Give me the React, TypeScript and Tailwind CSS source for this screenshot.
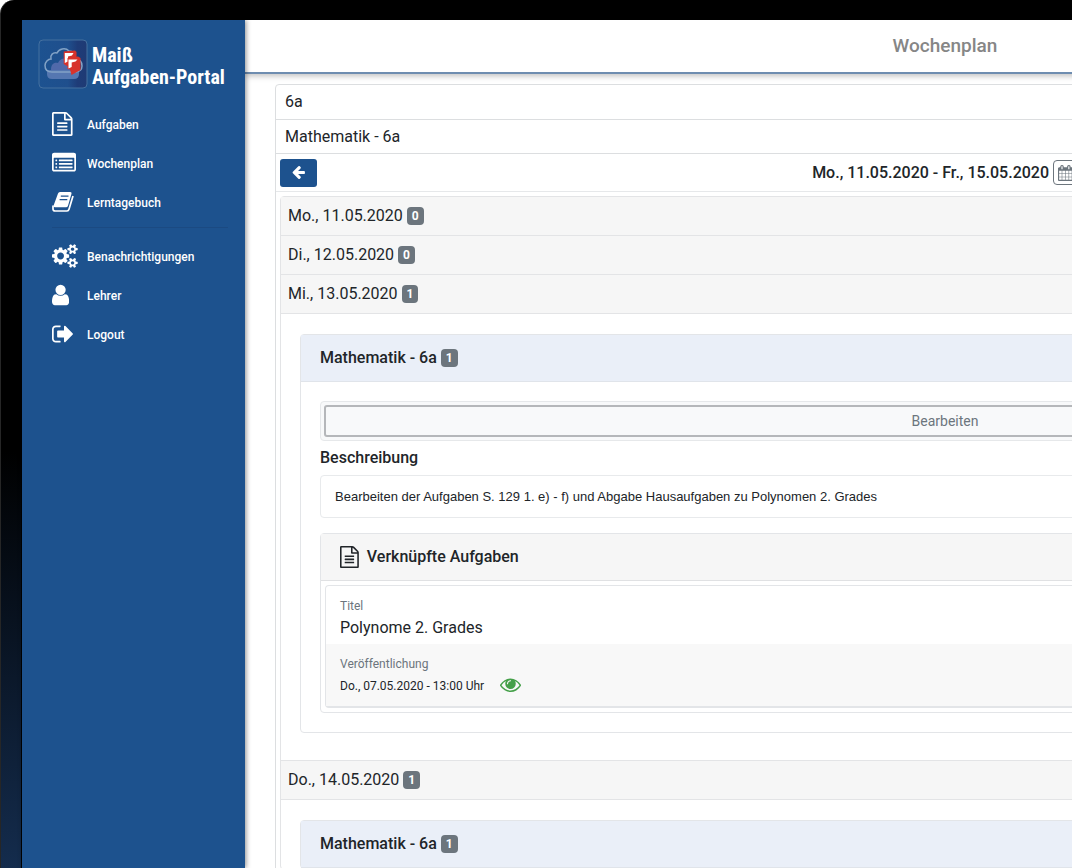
import type { ReactNode } from "react";

type IconName =
  | "file"
  | "list"
  | "cogs"
  | "user"
  | "logout"
  | "back"
  | "calendar"
  | "eye";

const ICONS: Record<IconName, { viewBox: string; d: string }> = {
  file: {
    viewBox: "128 0 1536 1792",
    d: "M1596 380q28 28 48 76t20 88v1152q0 40-28 68t-68 28h-1344q-40 0-68-28t-28-68v-1600q0-40 28-68t68-28h896q40 0 88 20t76 48zm-444-244v376h376q-10-29-22-41l-313-313q-12-12-41-22zm384 1528v-1024h-416q-40 0-68-28t-28-68v-416h-768v1536h1280zm-1024-864q0-14 9-23t23-9h704q14 0 23 9t9 23v64q0 14-9 23t-23 9h-704q-14 0-23-9t-9-23v-64zm736 224q14 0 23 9t9 23v64q0 14-9 23t-23 9h-704q-14 0-23-9t-9-23v-64q0-14 9-23t23-9h704zm0 256q14 0 23 9t9 23v64q0 14-9 23t-23 9h-704q-14 0-23-9t-9-23v-64q0-14 9-23t23-9h704z",
  },
  list: {
    viewBox: "0 0 1792 1792",
    d: "M384 1184v64q0 13-9.5 22.5t-22.5 9.5h-64q-13 0-22.5-9.5t-9.5-22.5v-64q0-13 9.5-22.5t22.5-9.5h64q13 0 22.5 9.5t9.5 22.5zm0-256v64q0 13-9.5 22.5t-22.5 9.5h-64q-13 0-22.5-9.5t-9.5-22.5v-64q0-13 9.5-22.5t22.5-9.5h64q13 0 22.5 9.5t9.5 22.5zm0-256v64q0 13-9.5 22.5t-22.5 9.5h-64q-13 0-22.5-9.5t-9.5-22.5v-64q0-13 9.5-22.5t22.5-9.5h64q13 0 22.5 9.5t9.5 22.5zm1152 512v64q0 13-9.5 22.5t-22.5 9.5h-960q-13 0-22.5-9.5t-9.5-22.5v-64q0-13 9.5-22.5t22.5-9.5h960q13 0 22.5 9.5t9.5 22.5zm0-256v64q0 13-9.5 22.5t-22.5 9.5h-960q-13 0-22.5-9.5t-9.5-22.5v-64q0-13 9.5-22.5t22.5-9.5h960q13 0 22.5 9.5t9.5 22.5zm0-256v64q0 13-9.5 22.5t-22.5 9.5h-960q-13 0-22.5-9.5t-9.5-22.5v-64q0-13 9.5-22.5t22.5-9.5h960q13 0 22.5 9.5t9.5 22.5zm128 704v-832q0-13-9.5-22.5t-22.5-9.5h-1472q-13 0-22.5 9.5t-9.5 22.5v832q0 13 9.5 22.5t22.5 9.5h1472q13 0 22.5-9.5t9.5-22.5zm128-1088v1088q0 66-47 113t-113 47h-1472q-66 0-113-47t-47-113v-1088q0-66 47-113t113-47h1472q66 0 113 47t47 113z",
  },
  cogs: {
    viewBox: "0 0 1920 1792",
    d: "M896 896q0-106-75-181t-181-75-181 75-75 181 75 181 181 75 181-75 75-181zm768 512q0-52-38-90t-90-38-90 38-38 90q0 53 37.5 90.5t90.5 37.5 90.5-37.5 37.5-90.5zm0-1024q0-52-38-90t-90-38-90 38-38 90q0 53 37.5 90.5t90.5 37.5 90.5-37.5 37.5-90.5zm-384 421v185q0 10-7 19.5t-16 10.5l-155 24q-11 35-32 76 34 48 90 115 7 11 7 20 0 12-7 19-23 30-82.5 89.5t-78.5 59.5q-11 0-21-7l-115-90q-37 19-77 31-11 108-23 155-7 24-30 24h-186q-11 0-20-7.5t-10-17.5l-23-153q-34-10-75-31l-118 89q-7 7-20 7-11 0-21-8-144-133-144-160 0-9 7-19 10-14 41-53t47-61q-23-44-35-82l-152-24q-10-1-17-9.5t-7-19.5v-185q0-10 7-19.5t16-10.5l155-24q11-35 32-76-34-48-90-115-7-11-7-20 0-12 7-20 22-30 82-89t79-59q11 0 21 7l115 90q34-18 77-32 11-108 23-154 7-24 30-24h186q11 0 20 7.5t10 17.5l23 153q34 10 75 31l118-89q8-7 20-7 11 0 21 8 144 133 144 160 0 8-7 19-12 16-42 54t-45 60q23 48 34 82l152 23q10 2 17 10.5t7 19.5zm640 533v140q0 16-149 31-12 27-30 52 51 113 51 138 0 4-4 7-122 71-124 71-8 0-46-47t-52-68q-20 2-30 2t-30-2q-14 21-52 68t-46 47q-2 0-124-71-4-3-4-7 0-25 51-138-18-25-30-52-149-15-149-31v-140q0-16 149-31 13-29 30-52-51-113-51-138 0-4 4-7 4-2 35-20t59-34 30-16q8 0 46 46.5t52 67.5q20-2 30-2t30 2q51-71 92-112l6-2q4 0 124 70 4 3 4 7 0 25-51 138 17 23 30 52 149 15 149 31zm0-1024v140q0 16-149 31-12 27-30 52 51 113 51 138 0 4-4 7-122 71-124 71-8 0-46-47t-52-68q-20 2-30 2t-30-2q-14 21-52 68t-46 47q-2 0-124-71-4-3-4-7 0-25 51-138-18-25-30-52-149-15-149-31v-140q0-16 149-31 13-29 30-52-51-113-51-138 0-4 4-7 4-2 35-20t59-34 30-16q8 0 46 46.5t52 67.5q20-2 30-2t30 2q51-71 92-112l6-2q4 0 124 70 4 3 4 7 0 25-51 138 17 23 30 52 149 15 149 31z",
  },
  user: {
    viewBox: "256 0 1280 1792",
    d: "M1536 1399q0 109-62.5 187t-150.5 78h-854q-88 0-150.5-78t-62.5-187q0-85 8.5-160.5t31.5-152 58.5-131 94-89 134.5-34.5q131 128 313 128t313-128q76 0 134.5 34.5t94 89 58.5 131 31.5 152 8.5 160.5zm-256-887q0 159-112.5 271.5t-271.5 112.5-271.5-112.5-112.5-271.5 112.5-271.5 271.5-112.5 271.5 112.5 112.5 271.5z",
  },
  logout: {
    viewBox: "64 0 1568 1792",
    d: "M704 1440q0 4 1 20t.5 26.5-3 23.5-10 19.5-20.5 6.5h-320q-119 0-203.5-84.5t-84.5-203.5v-704q0-119 84.5-203.5t203.5-84.5h320q13 0 22.5 9.5t9.5 22.5q0 4 1 20t.5 26.5-3 23.5-10 19.5-20.5 6.5h-320q-66 0-113 47t-47 113v704q0 66 47 113t113 47h312l11.5 1 11.5 3 8 5.5 7 9 2 13.5zm928-544q0 26-19 45l-544 544q-19 19-45 19t-45-19-19-45v-288h-448q-26 0-45-19t-19-45v-384q0-26 19-45t45-19h448v-288q0-26 19-45t45-19 45 19l544 544q19 19 19 45z",
  },
  back: {
    viewBox: "0 64 1792 1792",
    d: "M1664 896v128q0 53-32.5 90.5t-84.5 37.5h-704l293 294q38 36 38 90t-38 90l-75 76q-37 37-90 37-52 0-91-37l-651-652q-37-37-37-90 0-52 37-91l651-650q38-38 91-38 52 0 90 38l75 74q38 38 38 91t-38 91l-293 293h704q52 0 84.5 37.5t32.5 90.5z",
  },
  calendar: {
    viewBox: "64 0 1664 1792",
    d: "M192 1664h288v-288h-288v288zm352 0h320v-288h-320v288zm-352-352h288v-320h-288v320zm352 0h320v-320h-320v320zm-352-384h288v-288h-288v288zm736 736h320v-288h-320v288zm-384-736h320v-288h-320v288zm768 736h288v-288h-288v288zm-384-352h320v-320h-320v320zm-352-864v-288q0-13-9.5-22.5t-22.5-9.5h-64q-13 0-22.5 9.5t-9.5 22.5v288q0 13 9.5 22.5t22.5 9.5h64q13 0 22.5-9.5t9.5-22.5zm736 864h288v-320h-288v320zm-384-384h320v-288h-320v288zm384 0h288v-288h-288v288zm32-480v-288q0-13-9.5-22.5t-22.5-9.5h-64q-13 0-22.5 9.5t-9.5 22.5v288q0 13 9.5 22.5t22.5 9.5h64q13 0 22.5-9.5t9.5-22.5zm384-64v1280q0 52-38 90t-90 38h-1408q-52 0-90-38t-38-90v-1280q0-52 38-90t90-38h128v-96q0-66 47-113t113-47h64q66 0 113 47t47 113v96h384v-96q0-66 47-113t113-47h64q66 0 113 47t47 113v96h128q52 0 90 38t38 90z",
  },
  eye: {
    viewBox: "0 0 1792 1792",
    d: "M1664 960q-152-236-381-353 61 104 61 225 0 185-131.5 316.5t-316.5 131.5-316.5-131.5-131.5-316.5q0-121 61-225-229 117-381 353 133 205 333.5 326.5t434.5 121.5 434.5-121.5 333.5-326.5zm-720-384q0-20-14-34t-34-14q-125 0-214.5 89.5t-89.5 214.5q0 20 14 34t34 14 34-14 14-34q0-86 61-147t147-61q20 0 34-14t14-34zm848 384q0 34-20 69-140 230-376.5 368.5t-499.5 138.5-499.5-139-376.5-368q-20-35-20-69t20-69q140-229 376.5-368t499.5-139 499.5 139 376.5 368q20 35 20 69zM1210 832a314 314 0 1 1-628 0a314 314 0 1 1 628 0zM944 576q0-20-14-34t-34-14q-125 0-214.5 89.5t-89.5 214.5q0 20 14 34t34 14 34-14 14-34q0-86 61-147t147-61q20 0 34-14t14-34z",
  },
};

function Icon({ name, className }: { name: IconName; className: string }) {
  const icon = ICONS[name];
  return (
    <svg viewBox={icon.viewBox} className={className} fill="currentColor" aria-hidden="true">
      <path d={icon.d} />
    </svg>
  );
}

function BookIcon() {
  return (
    <svg viewBox="0 0 22 24" className="block h-6 w-auto" aria-hidden="true">
      <path
        d="M8 2H18.200Q20 2 19.500 3.800L16 15.700Q15.500 17.200 14 17.200H2.800Q1 17.200 1.600 15.500L6 3.500Q6.500 2 8 2Z"
        fill="currentColor"
      />
      <path
        d="M21 6L17 19.300Q16.500 21 15 21H3.200Q0.800 21 1 18.500V15.500"
        fill="none"
        stroke="currentColor"
        strokeWidth="1.700"
      />
      <path d="M8.800 6.200H16.500M7.600 9.700H15.300" fill="none" stroke="#1d528e" strokeWidth="1.300" />
    </svg>
  );
}

function Logo() {
  return (
    <svg viewBox="0 0 50 50" className="size-[50px] shrink-0" aria-hidden="true">
      <defs>
        <linearGradient id="tile" x1="0" x2="1" y1="0" y2="0">
          <stop offset="0" stopColor="#1d5290" />
          <stop offset="0.6" stopColor="#1f4f8d" />
          <stop offset="0.8" stopColor="#1e3c78" />
          <stop offset="1" stopColor="#1f3a74" />
        </linearGradient>
      </defs>
      <rect x="1" y="1" width="48" height="48" rx="4" fill="url(#tile)" stroke="#44709f" />
      <path d="M9 31H41V35Q41 40 36 40H14Q9 40 9 35Z" fill="#5577b1" />
      <path d="M13 31C13 25 16 23 20 24C22 19 28 18 31 22L36 25V31Z" fill="#5069aa" />
      <path
        d="M14 33C9 33 7 30 7 26.500C7 23 10 20 13 20C12 16 15 13 19 14C21 10 27 8 31 12C35 12 37 15 37 19C42 20 44 23 44 27C44 30 42 33 38 33Z"
        fill="none"
        stroke="#82a2c6"
        strokeWidth="1.500"
      />
      <path d="M25.700 12.500L37 11.500L38.500 13V25L29 27L25.700 25Z" fill="#d8322b" />
      <path d="M26.800 14H35.500L34 16.500L30 17.500V22.500L26.800 24Z" fill="#fff" />
      <path d="M29.500 19L40 17.500L42.500 19V31L33.500 36L32 30.500L29.500 30Z" fill="#d8322b" />
      <path d="M30.500 20.500H39.500L37.500 22.500L33.700 23.500V28L30.500 29.500Z" fill="#fff" />
    </svg>
  );
}

function NavItem({ icon, label }: { icon: ReactNode; label: string }) {
  return (
    <a href="#" className="flex h-[38px] items-center text-[12px] font-medium text-white">
      <span className="w-[35px] shrink-0">{icon}</span>
      <span className="pt-[2px]">{label}</span>
    </a>
  );
}

const navIcon = "block h-6 w-auto";

function Badge({ count }: { count: number }) {
  return (
    <span className="flex h-[18px] items-center rounded bg-[#6c757d] px-[5px] text-[12px] leading-[18px] font-bold text-white">
      {count}
    </span>
  );
}

function DayHeader({ label, count, open }: { label: string; count: number; open?: boolean }) {
  return (
    <button
      type="button"
      aria-expanded={!!open}
      className="flex h-[39px] w-full items-center gap-1 border-b border-[#e3e4e6] bg-[#f6f6f6] px-[7px] text-left"
    >
      {label}
      <Badge count={count} />
    </button>
  );
}

function SubjectCard({ children }: { children?: ReactNode }) {
  return (
    <section className="mx-[19px] mt-5 rounded border border-[#e3e5e8]">
      <h3 className="flex h-[47px] items-center gap-1 border-b border-[#e0e4ea] bg-[#eaeff8] px-[19px] font-medium">
        Mathematik - 6a
        <Badge count={1} />
      </h3>
      {children}
    </section>
  );
}

function LinkedTasks() {
  return (
    <section className="mt-[15px] rounded border border-[#e3e5e8]">
      <h4 className="flex h-[47px] items-center gap-2 border-b border-[#e0e1e3] bg-[#f6f6f6] px-[19px] font-medium">
        <Icon name="file" className="block h-[22px] w-auto" />
        Verknüpfte Aufgaben
      </h4>
      <div className="p-1">
        <dl className="rounded border border-b-2 border-[#e3e5e8]">
          <div className="px-[14px] pt-[10px] pb-1">
            <dt className="text-[12px] leading-5 text-[#6c757d]">Titel</dt>
            <dd className="leading-6">Polynome 2. Grades</dd>
          </div>
          <div className="bg-[#f8f8f8] px-[14px] pt-[10px] pb-2">
            <dt className="text-[12px] leading-5 text-[#6c757d]">Veröffentlichung</dt>
            <dd className="flex h-6 items-center gap-4 text-[12px]">
              Do., 07.05.2020 - 13:00 Uhr
              <Icon name="eye" className="mb-1 block size-[21px] text-[#45a049]" />
            </dd>
          </div>
        </dl>
      </div>
    </section>
  );
}

export default function App() {
  return (
    <div className="h-screen overflow-hidden bg-white font-['Roboto','Liberation_Sans',sans-serif] text-[16px] text-[#212529]">
      <div className="flex h-full flex-col rounded-tl-[14px] border-l border-[#262626] bg-[linear-gradient(to_bottom,#000_52%,#142c4d)] pt-5">
        <div className="ml-5 flex min-h-0 flex-1 border-l border-black">
          <aside className="z-10 w-[223px] shrink-0 bg-[#1d528e] shadow-[1px_0_5px_rgba(0,0,0,0.45)]">
            <div className="flex items-center gap-1 pt-[19px] pl-4">
              <Logo />
              <p className="pt-[3px] font-['Liberation_Sans_Narrow','Roboto_Condensed','Roboto',sans-serif] text-[20px] leading-[22px] font-bold whitespace-nowrap text-white">
                Maiß
                <br />
                Aufgaben-Portal
              </p>
            </div>
            <nav className="flex flex-col gap-px pt-4 pr-[17px] pl-[30px]">
              <NavItem icon={<Icon name="file" className={navIcon} />} label="Aufgaben" />
              <NavItem icon={<Icon name="list" className={navIcon} />} label="Wochenplan" />
              <NavItem icon={<BookIcon />} label="Lerntagebuch" />
              <hr className="mt-[5px] mb-2 border-[#1b4a82]" />
              <NavItem icon={<Icon name="cogs" className={navIcon} />} label="Benachrichtigungen" />
              <NavItem icon={<Icon name="user" className={navIcon} />} label="Lehrer" />
              <NavItem icon={<Icon name="logout" className={navIcon} />} label="Logout" />
            </nav>
          </aside>

          {/* The planner is laid out for a wide desktop and runs past the frame. */}
          <main className="flex min-w-[1400px] flex-1 flex-col bg-white">
            <header className="flex h-[54px] shrink-0 items-center justify-center border-b-2 border-[#6e8db0] shadow-[0_2px_6px_rgba(0,0,0,0.25)]">
              <h1 className="text-[19px] font-medium text-[#868686]">Wochenplan</h1>
            </header>

            <div className="mx-[30px] mt-[10px] shrink-0 rounded border border-[#dcdee0]">
              <div className="flex h-[35px] items-center border-b border-[#dcdee0] px-[9px]">6a</div>
              <div className="flex h-[34px] items-center border-b border-[#dcdee0] px-[9px]">
                Mathematik - 6a
              </div>
              <div className="grid h-[38px] grid-cols-[1fr_auto_1fr] items-center border-b border-[#e6e8ea] px-1">
                <button
                  type="button"
                  aria-label="Vorherige Woche"
                  className="flex h-7 w-[37px] items-center justify-center rounded-[3px] bg-[#1d528e] text-white"
                >
                  <Icon name="back" className="size-[15px]" />
                </button>
                <div className="flex items-center gap-1">
                  <h2 className="font-medium">Mo., 11.05.2020 - Fr., 15.05.2020</h2>
                  <button
                    type="button"
                    aria-label="Kalender"
                    className="flex h-[25px] items-center rounded border border-[#6c757d] px-1 text-[#6c757d]"
                  >
                    <Icon name="calendar" className="block h-4 w-auto" />
                  </button>
                </div>
              </div>

              <div className="m-1 rounded border border-[#e3e4e6]">
                <DayHeader label="Mo., 11.05.2020" count={0} />
                <DayHeader label="Di., 12.05.2020" count={0} />
                <DayHeader label="Mi., 13.05.2020" count={1} open />
                <div className="border-b border-[#e3e4e6] pb-[27px]">
                  <SubjectCard>
                    <div className="p-[19px]">
                      <div className="rounded border border-[#e6e8ea] bg-[#f8f9fa] p-[3px]">
                        <button
                          type="button"
                          className="h-8 w-full rounded-[3px] border-2 border-[#b5b7ba] text-[14px] text-[#6c757d]"
                        >
                          Bearbeiten
                        </button>
                      </div>
                      <h4 className="py-[5px] leading-6 font-medium">Beschreibung</h4>
                      <p className="rounded border border-[#e8eaec] px-[14px] py-[10px] font-['Liberation_Sans',sans-serif] text-[13px] leading-[21px]">
                        Bearbeiten der Aufgaben S. 129 1. e) - f) und Abgabe Hausaufgaben zu Polynomen
                        2. Grades
                      </p>
                      <LinkedTasks />
                    </div>
                  </SubjectCard>
                </div>
                <DayHeader label="Do., 14.05.2020" count={1} open />
                <SubjectCard />
              </div>
            </div>
          </main>
        </div>
      </div>
    </div>
  );
}
